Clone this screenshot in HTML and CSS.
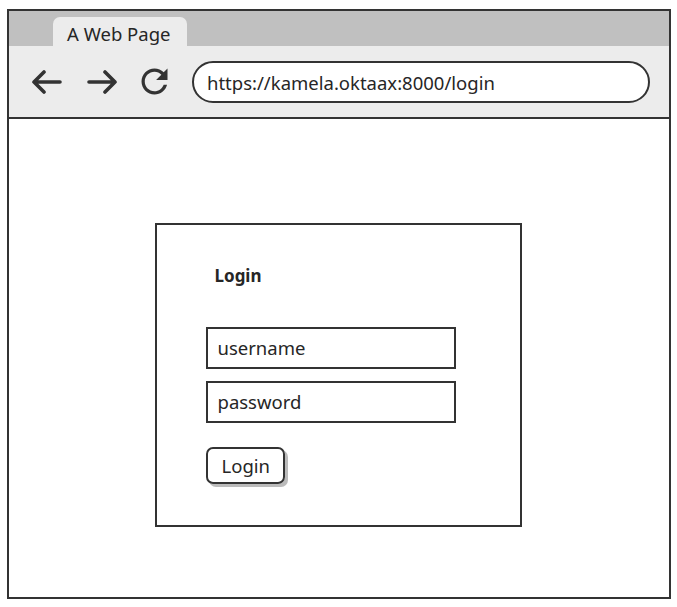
FILE: index.html
```html
<!DOCTYPE html>
<html lang="en">
<head>
    <meta charset="UTF-8">
    <meta name="viewport" content="width=device-width, initial-scale=1.0">
    <title>A Web Page</title>
    <link rel="stylesheet" href="styles.css">
</head>
<body>
    <div class="window">
        <div class="tabbar">
            <div class="tab">A Web Page</div>
        </div>
        <div class="toolbar">
            <svg class="nav-icon" width="30" height="24" viewBox="0 0 30 24">
                <path d="M2 12H28 M12 2L2 12L12 22" fill="none" stroke="#333" stroke-width="3.6" stroke-linecap="round" stroke-linejoin="round"/>
            </svg>
            <svg class="nav-icon forward" width="30" height="24" viewBox="0 0 30 24">
                <path d="M2 12H28 M18 2L28 12L18 22" fill="none" stroke="#333" stroke-width="3.6" stroke-linecap="round" stroke-linejoin="round"/>
            </svg>
            <svg class="nav-icon reload" width="39" height="39" viewBox="0 0 24 24">
                <path fill="#333" d="M17.65 6.35C16.2 4.9 14.21 4 12 4c-4.42 0-7.99 3.58-7.99 8s3.57 8 7.99 8c3.73 0 6.84-2.550 7.73-6h-2.08c-.82 2.33-3.04 4-5.65 4-3.31 0-6-2.69-6-6s2.69-6 6-6c1.66 0 3.14.69 4.22 1.78L13 11h7V4l-2.35 2.35z"/>
            </svg>
            <div class="address">https://kamela.oktaax:8000/login</div>
        </div>
        <div class="page">
            <div class="login-box">
                <div class="login-title">Login</div>
                <div class="field">username</div>
                <div class="field">password</div>
                <div class="button">Login</div>
            </div>
        </div>
    </div>
</body>
</html>
```

FILE: styles.css
```css
body {
    margin: 0;
    background-color: #fff;
    color: #262626;
    font-family: 'Noto Sans', 'Open Sans', sans-serif;
}
.window {
    margin: 9px 6px 0 7px;
    height: 586px;
    border: 2px solid #333;
    display: flex;
    flex-direction: column;
}
.tabbar {
    background-color: #c0c0c0;
    height: 35px;
    padding-left: 44px;
    display: flex;
    align-items: flex-end;
}
.tab {
    background-color: #ececec;
    width: 120px;
    height: 29px;
    padding-left: 14px;
    border-radius: 7px 7px 0 0;
    font-size: 18.5px;
    line-height: 34px;
}
.toolbar {
    background-color: #ececec;
    height: 71px;
    border-bottom: 2px solid #333;
    padding-left: 23px;
    display: flex;
    align-items: center;
}
.nav-icon {
    flex-shrink: 0;
}
.forward {
    margin-left: 25px;
}
.reload {
    margin-left: 18px;
}
.address {
    margin-left: 18px;
    width: 441px;
    height: 38px;
    padding-left: 13px;
    border: 2px solid #333;
    border-radius: 21px;
    background-color: #fff;
    font-size: 18.5px;
    line-height: 39px;
}
.page {
    flex: 1;
    padding-top: 104px;
    display: flex;
    justify-content: center;
    align-items: flex-start;
}
.login-box {
    width: 314px;
    height: 300px;
    margin-right: 2px;
    padding-left: 49px;
    border: 2px solid #333;
}
.login-title {
    margin: 41px 0 0 9px;
    font-size: 17px;
    font-weight: bold;
    line-height: 20px;
}
.field {
    width: 236px;
    height: 38px;
    padding-left: 10px;
    border: 2px solid #333;
    font-size: 18.5px;
    line-height: 37px;
}
.login-title + .field {
    margin-top: 41px;
}
.field + .field {
    margin-top: 12px;
}
.button {
    margin-top: 24px;
    display: inline-block;
    height: 33px;
    padding: 0 13px 0 14px;
    border: 2px solid #333;
    border-radius: 7px;
    box-shadow: 3px 3px 0 #bbb;
    font-size: 18.5px;
    line-height: 33px;
}
```
